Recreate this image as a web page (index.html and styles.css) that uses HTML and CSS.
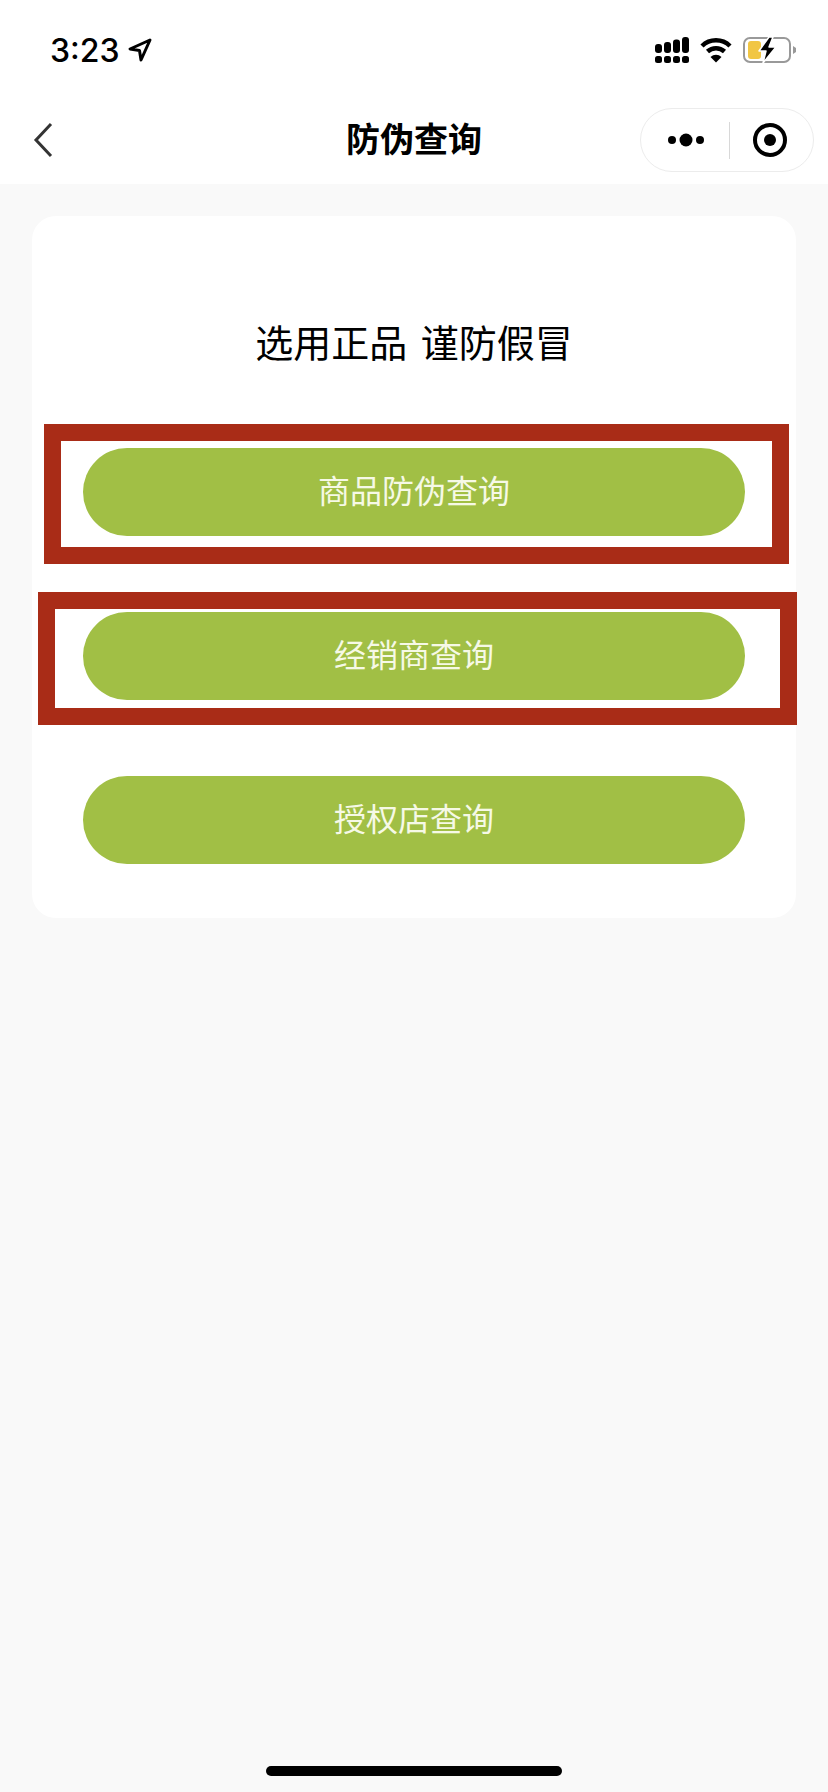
FILE: index.html
```html
<!DOCTYPE html>
<html lang="zh-CN">
<head>
  <meta charset="UTF-8" />
  <meta name="viewport" content="width=device-width, initial-scale=1.0"/>
  <title>防伪查询</title>
  <link rel="stylesheet" href="styles.css">
</head>
<body>
  <header class="top">
    <div class="statusbar">
      <div class="status-left">
        <span class="time">3:23</span>
        <svg class="icon-loc" width="26" height="26" viewBox="0 0 26 26">
          <path d="M23 3 L3 12 L12.5 13.5 L14 23 Z" fill="none" stroke="#000" stroke-width="3" stroke-linejoin="round"/>
        </svg>
      </div>
      <div class="status-right">
        <svg width="34" height="26" viewBox="0 0 34 26">
          <rect x="0" y="7" width="7" height="9" rx="3"/>
          <rect x="9" y="5" width="7" height="11" rx="3"/>
          <rect x="18" y="2.5" width="7" height="13.5" rx="3"/>
          <rect x="27" y="0" width="7" height="16" rx="3"/>
          <rect x="0" y="19" width="7" height="7" rx="2.5"/>
          <rect x="9" y="19" width="7" height="7" rx="2.5"/>
          <rect x="18" y="19" width="7" height="7" rx="2.5"/>
          <rect x="27" y="19" width="7" height="7" rx="2.5"/>
        </svg>
        <svg width="32" height="26" viewBox="0 0 32 26">
          <path d="M2 9 A20 20 0 0 1 30 9" fill="none" stroke="#000" stroke-width="4.5"/>
          <path d="M7.5 14.5 A12.5 12.5 0 0 1 24.5 14.5" fill="none" stroke="#000" stroke-width="4.5"/>
          <path d="M10.5 20 L16 25.5 L21.5 20 A8 8 0 0 0 10.5 20 Z"/>
        </svg>
        <svg width="54" height="26" viewBox="0 0 54 26">
          <rect x="1" y="1" width="46" height="24" rx="6" fill="#fff" stroke="#999" stroke-width="2"/>
          <rect x="5" y="4" width="13" height="18" rx="3" fill="#f1c644"/>
          <path d="M50 9 L53 11 L53 15 L50 17 Z" fill="#999"/>
          <path d="M26 0 L16 14 L23 14 L20 26 L33 10 L26 10 L30 0 Z" fill="#000" stroke="#fff" stroke-width="1.5" stroke-linejoin="round"/>
        </svg>
      </div>
    </div>
    <div class="navbar">
      <svg class="back" width="20" height="36" viewBox="0 0 20 36">
        <path d="M18 2 L3 18 L18 34" fill="none" stroke="#333" stroke-width="3"/>
      </svg>
      <div class="title">防伪查询</div>
      <div class="capsule">
        <svg class="capsule-btn" width="40" height="16" viewBox="0 0 40 16">
          <circle cx="5" cy="8" r="4"/>
          <circle cx="19" cy="8" r="6.5"/>
          <circle cx="33" cy="8" r="4"/>
        </svg>
        <span class="capsule-line"></span>
        <svg class="capsule-btn" width="36" height="36" viewBox="0 0 36 36">
          <circle cx="18" cy="18" r="15" fill="none" stroke="#000" stroke-width="4"/>
          <circle cx="18" cy="18" r="6"/>
        </svg>
      </div>
    </div>
  </header>

  <section class="card">
    <h1>选用正品 谨防假冒</h1>
    <div class="btn-list">
      <a class="btn">商品防伪查询</a>
      <a class="btn">经销商查询</a>
      <a class="btn">授权店查询</a>
    </div>
    <!-- red marks drawn on top of the screenshot -->
    <div class="mark mark-one"></div>
    <div class="mark mark-two"></div>
  </section>

  <div class="home-bar"></div>
</body>
</html>
```

FILE: styles.css
```css
* {
  box-sizing: border-box;
}

html, body {
  height: 100%;
}

body {
  font-family: "Noto Sans CJK SC", "Liberation Sans", sans-serif;
  margin: 0;
  padding: 0;
  background-color: #f9f9f9;
  color: #000;
  display: flex;
  flex-direction: column;
}

.top {
  background-color: #fff;
}

.statusbar {
  height: 100px;
  padding: 0 31px 0 50px;
  display: flex;
  justify-content: space-between;
  align-items: center;
}

.status-left {
  display: flex;
  align-items: center;
  gap: 7px;
}

.time {
  font-family: Inter, "Liberation Sans", sans-serif;
  font-size: 32px;
  font-weight: 500;
}

.status-right {
  display: flex;
  align-items: center;
  gap: 11px;
}

.navbar {
  height: 84px;
  padding: 0 14px 4px;
  display: grid;
  grid-template-columns: 1fr auto 1fr;
  align-items: center;
}

.back {
  margin-left: 19px;
}

.title {
  font-size: 34px;
  font-weight: 700;
  line-height: 48px;
  margin-bottom: 4px;
}

.capsule {
  justify-self: end;
  width: 174px;
  height: 64px;
  border: 1px solid #ececec;
  border-radius: 32px;
  display: flex;
  align-items: center;
  justify-content: space-between;
  padding: 0 25px 0 26px;
}

.capsule-line {
  width: 1px;
  height: 37px;
  background-color: #d8d8d8;
}

.card {
  position: relative;
  margin: 32px 32px 0;
  height: 702px;
  background-color: #fff;
  border-radius: 24px;
  padding-top: 96px;
}

h1 {
  margin: 0;
  font-size: 38px;
  font-weight: 400;
  line-height: 58px;
  text-align: center;
  word-spacing: 5px;
}

.btn-list {
  margin: 78px 51px 0;
  display: flex;
  flex-direction: column;
  gap: 76px;
}

.btn {
  height: 88px;
  padding-bottom: 7px;
  border-radius: 44px;
  background-color: #a1bf45;
  color: #f6f9e6;
  font-size: 32px;
  display: flex;
  align-items: center;
  justify-content: center;
}

.mark {
  position: absolute;
  border: 17px solid #a92c17;
}

.mark-one {
  left: 12px;
  top: 208px;
  width: 745px;
  height: 140px;
}

.mark-two {
  left: 6px;
  top: 376px;
  width: 759px;
  height: 133px;
}

.home-bar {
  width: 296px;
  height: 10px;
  border-radius: 5px;
  background-color: #000;
  margin: auto auto 16px;
}
```
